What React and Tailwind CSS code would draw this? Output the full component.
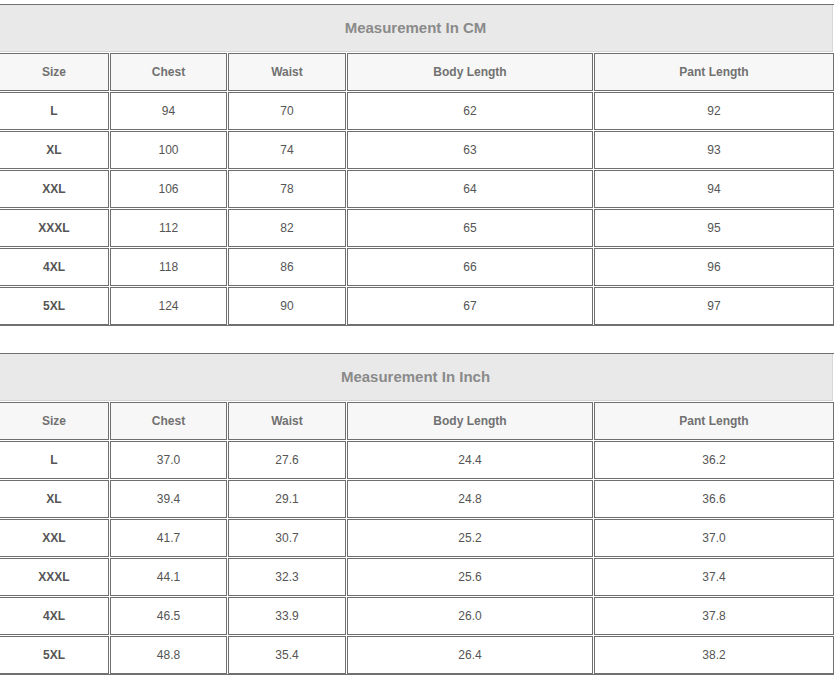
import React from "react";

const widths = ["w-[110px]", "w-[117px]", "w-[118px]", "w-[246px]", "w-[240px]"];
const headers = ["Size", "Chest", "Waist", "Body Length", "Pant Length"];

const cm = [
  ["L", "94", "70", "62", "92"],
  ["XL", "100", "74", "63", "93"],
  ["XXL", "106", "78", "64", "94"],
  ["XXXL", "112", "82", "65", "95"],
  ["4XL", "118", "86", "66", "96"],
  ["5XL", "124", "90", "67", "97"],
];
const inch = [
  ["L", "37.0", "27.6", "24.4", "36.2"],
  ["XL", "39.4", "29.1", "24.8", "36.6"],
  ["XXL", "41.7", "30.7", "25.2", "37.0"],
  ["XXXL", "44.1", "32.3", "25.6", "37.4"],
  ["4XL", "46.5", "33.9", "26.0", "37.8"],
  ["5XL", "48.8", "35.4", "26.4", "38.2"],
];

function Row({ cells, header }) {
  return (
    <div className="flex gap-[1px] mt-[1px]">
      {cells.map((c, i) => (
        <div
          key={i}
          className={`${widths[i]} shrink-0 h-[38px] border border-[#6f6f6f] flex items-center justify-center text-[12px] ${
            header ? "bg-[#f7f7f7] text-[#717171] font-bold" : "bg-white text-[#555]"
          } ${i === 0 && !header ? "font-bold text-[#555]" : ""}`}
        >
          {c}
        </div>
      ))}
    </div>
  );
}

function Table({ title, data }) {
  return (
    <div className="-ml-[1px] w-[835px] border-t border-b border-[#707070]">
      <div className="h-[47px] bg-[#e9e9e9] border-b border-[#d4d4d4] border-r border-r-[#d8d8d8] mr-[1px] flex items-center justify-center text-[15px] font-bold text-[#8a8a8a]">
        {title}
      </div>
      <Row cells={headers} header />
      {data.map((r, i) => (
        <Row key={i} cells={r} />
      ))}
    </div>
  );
}

export default function App() {
  return (
    <div
      className="w-[834px] h-[679px] bg-white overflow-hidden pt-[4px]"
      style={{ fontFamily: '"Liberation Sans", Arial, sans-serif' }}
    >
      <Table title="Measurement In CM" data={cm} />
      <div className="h-[27px]" />
      <Table title="Measurement In Inch" data={inch} />
    </div>
  );
}
